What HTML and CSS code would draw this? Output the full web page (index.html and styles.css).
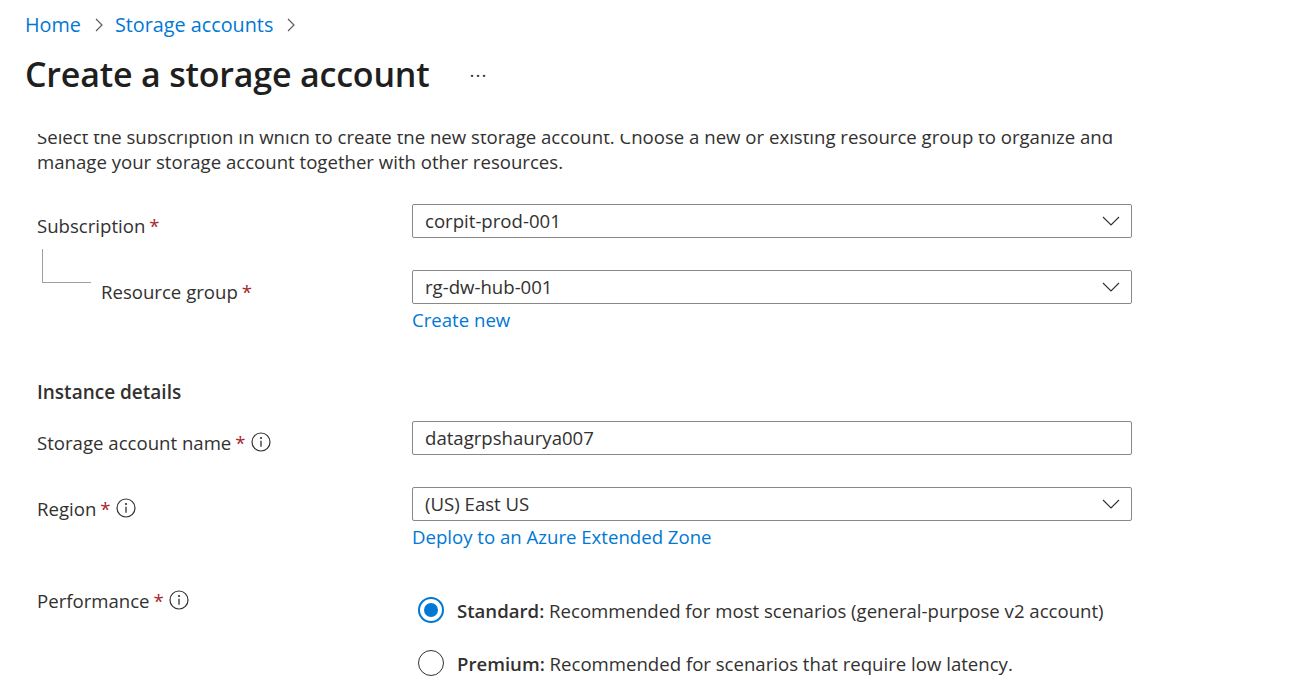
FILE: index.html
```html
<!DOCTYPE html>
<html lang="en">
<head>
<meta charset="utf-8">
<title>Create a storage account</title>
<link rel="stylesheet" href="styles.css">
</head>
<body>
<header class="page-head">
  <nav class="breadcrumb">
    <a class="crumb" href="#">Home</a>
    <svg class="crumb-sep" viewBox="0 0 10 16" width="10" height="16"><path d="M2 2 L8 8 L2 14" fill="none" stroke="#605e5c" stroke-width="1.2"/></svg>
    <a class="crumb" href="#">Storage accounts</a>
    <svg class="crumb-sep" viewBox="0 0 10 16" width="10" height="16"><path d="M2 2 L8 8 L2 14" fill="none" stroke="#605e5c" stroke-width="1.2"/></svg>
  </nav>
  <div class="title-row">
    <h1 class="title">Create a storage account</h1>
    <span class="more">&middot;&middot;&middot;</span>
  </div>
</header>

<main class="scroller">
  <div class="scroll-inner">
    <p class="desc">Select the subscription in which to create the new storage account. Choose a new or existing resource group to organize and manage your storage account together with other resources.</p>

    <div class="row row-first">
      <div class="label"><span>Subscription</span><span class="req">*</span></div>
      <div class="control">
        <div class="select"><span>corpit-prod-001</span>
          <svg class="chev" viewBox="0 0 18 10" width="18" height="10"><path d="M1 1 L9 9 L17 1" fill="none" stroke="#323130" stroke-width="1.1"/></svg>
        </div>
      </div>
    </div>

    <div class="row">
      <div class="label label-child"><span class="tree"></span><span>Resource group</span><span class="req">*</span></div>
      <div class="control">
        <div class="select"><span>rg-dw-hub-001</span>
          <svg class="chev" viewBox="0 0 18 10" width="18" height="10"><path d="M1 1 L9 9 L17 1" fill="none" stroke="#323130" stroke-width="1.1"/></svg>
        </div>
        <a class="link" href="#">Create new</a>
      </div>
    </div>

    <h2 class="section">Instance details</h2>

    <div class="row row-tight">
      <div class="label"><span>Storage account name</span><span class="req">*</span>
        <svg class="info" viewBox="0 0 20 20" width="20" height="20"><circle cx="10" cy="10" r="9" fill="none" stroke="#323130" stroke-width="1.2"/><circle cx="10" cy="6" r="1.1" fill="#323130"/><path d="M10 8.8 V14.8" stroke="#323130" stroke-width="1.3"/></svg>
      </div>
      <div class="control">
        <div class="select input"><span>datagrpshaurya007</span></div>
      </div>
    </div>

    <div class="row">
      <div class="label"><span>Region</span><span class="req">*</span>
        <svg class="info" viewBox="0 0 20 20" width="20" height="20"><circle cx="10" cy="10" r="9" fill="none" stroke="#323130" stroke-width="1.2"/><circle cx="10" cy="6" r="1.1" fill="#323130"/><path d="M10 8.8 V14.8" stroke="#323130" stroke-width="1.3"/></svg>
      </div>
      <div class="control">
        <div class="select"><span>(US) East US</span>
          <svg class="chev" viewBox="0 0 18 10" width="18" height="10"><path d="M1 1 L9 9 L17 1" fill="none" stroke="#323130" stroke-width="1.1"/></svg>
        </div>
        <a class="link" href="#">Deploy to an Azure Extended Zone</a>
      </div>
    </div>

    <div class="row row-perf">
      <div class="label"><span>Performance</span><span class="req">*</span>
        <svg class="info" viewBox="0 0 20 20" width="20" height="20"><circle cx="10" cy="10" r="9" fill="none" stroke="#323130" stroke-width="1.2"/><circle cx="10" cy="6" r="1.1" fill="#323130"/><path d="M10 8.8 V14.8" stroke="#323130" stroke-width="1.3"/></svg>
      </div>
      <div class="control radios">
        <div class="radio-opt">
          <span class="radio checked"></span>
          <span><b>Standard:</b> Recommended for most scenarios (general-purpose v2 account)</span>
        </div>
        <div class="radio-opt">
          <span class="radio"></span>
          <span><b>Premium:</b> Recommended for scenarios that require low latency.</span>
        </div>
      </div>
    </div>
  </div>
</main>
</body>
</html>
```

FILE: styles.css
```css
* { box-sizing: border-box; }
html, body { margin: 0; padding: 0; background: #ffffff; }
body {
  font-family: "Open Sans", "Noto Sans", sans-serif;
  font-size: 18.6px;
  color: #323130;
  width: 1315px;
  height: 687px;
  overflow: hidden;
}

.page-head { padding: 10px 0 0 25px; height: 134px; }

.breadcrumb { display: flex; align-items: center; height: 28px; }
.crumb { color: #0078d4; text-decoration: none; font-size: 19.8px; }
.crumb-sep { margin: 1px 11px 0 13px; }

.title-row { display: flex; align-items: center; margin-top: 13px; height: 46px; }
.title {
  margin: 0;
  font-size: 34px;
  font-weight: 600;
  color: #201f1e;
  letter-spacing: -0.2px;
}
.more { margin-left: 40px; font-size: 19px; color: #323130; letter-spacing: 1px; padding-top: 2px; }

.scroller { height: 553px; overflow: hidden; padding-left: 37px; }
.scroll-inner { margin-top: -10.5px; width: 1095px; }

.desc { margin: 0; line-height: 25px; width: 1090px; }

.row { display: grid; grid-template-columns: 375px 720px; align-items: start; margin-top: 32px; }
.row-first { margin-top: 30.5px; }
.row-tight { margin-top: 16.5px; }
.row-perf { margin-top: 30.5px; }

.label { padding-top: 8.5px; line-height: 25px; height: 34px; display: flex; align-items: center; white-space: nowrap; }
.label-child { align-items: flex-start; }
.req { color: #a4262c; margin-left: 4px; }
.info { margin-left: 5px; }

.tree {
  display: block;
  width: 49px;
  height: 34px;
  margin: -29.5px 10px 0 5px;
  border-left: 1px solid #a19f9d;
  border-bottom: 1px solid #a19f9d;
  flex: none;
}

.select {
  height: 34px;
  border: 1px solid #8a8886;
  border-radius: 2px;
  display: flex;
  align-items: center;
  justify-content: space-between;
  padding: 0 11px 0 12px;
  line-height: 25px;
}
.select span { padding-bottom: 2px; }

.link { display: block; color: #0078d4; text-decoration: none; margin-top: 2.5px; line-height: 25px; }

.section { margin: 48px 0 0 0; font-size: 19px; font-weight: 600; line-height: 25px; color: #323130; }

.radios { padding-top: 18px; }
.radio-opt { display: flex; align-items: center; height: 26px; margin-bottom: 27px; padding-left: 6px; }
.radio-opt b { font-weight: 600; }
.radio {
  width: 26px; height: 26px; border-radius: 50%;
  border: 1px solid #323130;
  margin-right: 13px;
  flex: none;
  display: flex; align-items: center; justify-content: center;
}
.radio.checked { border: 2px solid #0078d4; }
.radio.checked::after {
  content: "";
  width: 14px; height: 14px; border-radius: 50%;
  background: #0078d4;
}
```
